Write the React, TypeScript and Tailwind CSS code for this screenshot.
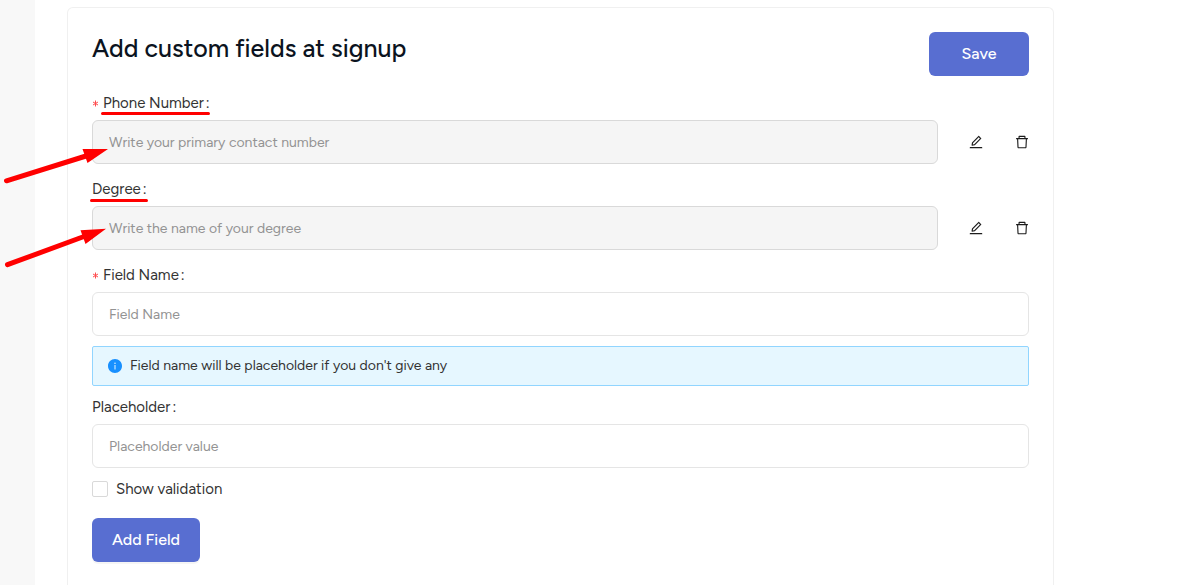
import { useState } from 'react';
import type { ReactNode } from 'react';
import { AiFillInfoCircle, AiOutlineDelete, AiOutlineEdit } from 'react-icons/ai';

interface CustomField {
  id: string;
  name: string;
  placeholder: string;
  required: boolean;
}

const initialFields: CustomField[] = [
  { id: 'phone', name: 'Phone Number', placeholder: 'Write your primary contact number', required: true },
  { id: 'degree', name: 'Degree', placeholder: 'Write the name of your degree', required: false },
];

const inputClass =
  'block h-11 w-full min-w-0 rounded-md border px-4 text-sm placeholder:text-[#939393] placeholder:opacity-100 focus:outline-none';

function FieldLabel({ htmlFor, required, children }: { htmlFor: string; required?: boolean; children: ReactNode }) {
  return (
    <label htmlFor={htmlFor} className="mb-1.5 flex h-[22px] items-center text-[15px] text-[#333333]">
      {required && (
        <svg viewBox="0 0 7 7" className="mr-1 size-[7px] text-[#ff4d4f]" stroke="currentColor" aria-hidden="true">
          <path d="M3.5 0.5v6M1 2l5 3M6 2l-5 3" />
        </svg>
      )}
      {children}
      <span className="ml-0.5">:</span>
    </label>
  );
}

function Annotations() {
  return (
    <svg className="pointer-events-none absolute top-0 left-0 h-[300px] w-[240px]" viewBox="0 0 240 300" aria-hidden="true">
      <g stroke="#ff0000" strokeLinecap="round" fill="none">
        <path d="M102.5 113.5H208.5M91.5 200.5H146.5" strokeWidth="3" />
        <path d="M6.5 180.8L86 156M7.5 264.7L84 236.5" strokeWidth="5" />
      </g>
      <path d="M82.5 149L108 149L87.5 163ZM80.5 230.2L106 228.8L85.5 244Z" fill="#ff0000" />
    </svg>
  );
}

export default function App() {
  const [fields, setFields] = useState(initialFields);
  const [name, setName] = useState('');
  const [placeholder, setPlaceholder] = useState('');
  const [validation, setValidation] = useState(false);

  const addField = () => {
    if (!name) return;
    setFields((prev) => [
      ...prev,
      { id: `field-${Date.now()}`, name, placeholder: placeholder || name, required: validation },
    ]);
    setName('');
    setPlaceholder('');
    setValidation(false);
  };

  const editField = (field: CustomField) => {
    setName(field.name);
    setPlaceholder(field.placeholder);
    setValidation(field.required);
    setFields((prev) => prev.filter((f) => f.id !== field.id));
  };

  return (
    <div className="relative flex min-h-screen bg-white font-['Figtree','Inter',sans-serif]">
      <aside className="w-[35px] shrink-0 bg-[#f8f8f8]" />

      <main className="mt-[7px] mr-[134px] ml-8 min-w-0 flex-1 rounded-t-md border border-b-0 border-[#f0f0f0] p-6 pb-[22px]">
        <div className="mb-4 flex h-11 items-start justify-between">
          <h1 className="text-[25px] leading-8 font-medium text-[#0b1320]">Add custom fields at signup</h1>
          <button type="button" className="h-11 w-[100px] rounded-md bg-[#586ed1] text-base font-medium text-white">
            Save
          </button>
        </div>

        {fields.map((field) => (
          <div key={field.id} className="mb-3.5">
            <FieldLabel htmlFor={field.id} required={field.required}>{field.name}</FieldLabel>
            <div className="-mr-px flex items-center gap-[30px]">
              <input
                id={field.id}
                disabled
                placeholder={field.placeholder}
                className={`${inputClass} flex-1 border-[#d9d9d9] bg-[#f5f5f5]`}
              />
              <button type="button" aria-label={`Edit ${field.name}`} onClick={() => editField(field)} className="text-[#1c1c1c]">
                <AiOutlineEdit className="size-4" />
              </button>
              <button
                type="button"
                aria-label={`Delete ${field.name}`}
                onClick={() => setFields((prev) => prev.filter((f) => f.id !== field.id))}
                className="text-[#1c1c1c]"
              >
                <AiOutlineDelete className="size-4" />
              </button>
            </div>
          </div>
        ))}

        <FieldLabel htmlFor="field-name" required>Field Name</FieldLabel>
        <input
          id="field-name"
          value={name}
          onChange={(e) => setName(e.target.value)}
          placeholder="Field Name"
          className={`${inputClass} border-[#e5e5e5]`}
        />

        <div className="my-2.5 flex h-10 items-center gap-[7px] rounded-xs border border-[#91d5ff] bg-[#e6f7ff] px-3.5 text-sm text-[#333333]">
          <AiFillInfoCircle className="size-4 text-[#1890ff]" />
          <span>Field name will be placeholder if you don't give any</span>
        </div>

        <FieldLabel htmlFor="field-placeholder">Placeholder</FieldLabel>
        <input
          id="field-placeholder"
          value={placeholder}
          onChange={(e) => setPlaceholder(e.target.value)}
          placeholder="Placeholder value"
          className={`${inputClass} border-[#e5e5e5]`}
        />

        <label className="mt-2.5 flex h-[22px] w-fit items-center gap-2 text-[15px] text-[#333333]">
          <input
            type="checkbox"
            checked={validation}
            onChange={(e) => setValidation(e.target.checked)}
            className="size-4 appearance-none rounded-xs border border-[#d9d9d9] bg-white checked:border-[#586ed1] checked:bg-[#586ed1]"
          />
          Show validation
        </label>

        <button
          type="button"
          onClick={addField}
          className="mt-[18px] block h-11 rounded-md bg-[#586ed1] px-5 text-base font-medium text-white shadow-[0_2px_0_rgba(0,0,0,0.04)]"
        >
          Add Field
        </button>
      </main>

      <Annotations />
    </div>
  );
}
